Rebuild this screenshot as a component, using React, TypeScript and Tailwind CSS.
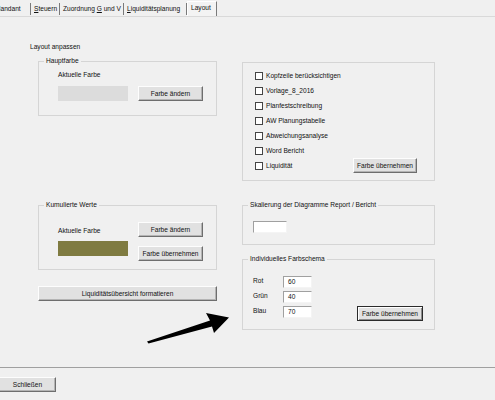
import React from 'react';

// ------------------------------------------------------------
// Small Win32-style building blocks
// ------------------------------------------------------------

function Btn({ children, className = '', focused = false }: {
  children: React.ReactNode;
  className?: string;
  focused?: boolean;
}) {
  return (
    <div
      className={`h-[15px] flex items-center justify-center bg-[#e1e1e1] border ${
        focused
          ? 'border-[#2b2b2b] shadow-[inset_1px_1px_0_#ffffff,inset_-1px_-1px_0_#8c8c8c]'
          : 'border-t-[#fdfdfd] border-l-[#fdfdfd] border-b-[#6e6e6e] border-r-[#6e6e6e] shadow-[inset_-1px_-1px_0_#b4b4b4]'
      } ${className}`}
    >
      {children}
    </div>
  );
}

function Field({ value = '', className = '' }: { value?: string; className?: string }) {
  return (
    <div
      className={`h-[12px] bg-white border border-t-[#a0a0a0] border-l-[#a0a0a0] border-b-[#f4f4f4] border-r-[#f4f4f4] flex items-center pl-[4px] ${className}`}
    >
      {value}
    </div>
  );
}

function Group({ title, className = '', children }: {
  title?: string;
  className?: string;
  children: React.ReactNode;
}) {
  return (
    <fieldset className={`border border-[#d5d5d5] ${className}`}>
      {title && <legend className="ml-[5px] px-[2px] leading-[8px]">{title}</legend>}
      {children}
    </fieldset>
  );
}

function Check({ label }: { label: string }) {
  return (
    <div className="flex items-center gap-[3px]">
      <div className="w-[8px] h-[8px] bg-white border border-[#444444]" />
      <span>{label}</span>
    </div>
  );
}

const TABS = [
  { label: 'Mandant', w: 'w-[39px]', key: '' },
  { label: 'Steuern', w: 'w-[29px]', key: 'S' },
  { label: 'Zuordnung G und V', w: 'w-[64px]', key: 'G' },
  { label: 'Liquiditätsplanung', w: 'w-[63px]', key: 'L' },
];

const CHECKS = [
  'Kopfzeile berücksichtigen',
  'Vorlage_8_2016',
  'Planfestschreibung',
  'AW Planungstabelle',
  'Abweichungsanalyse',
  'Word Bericht',
];

function TabLabel({ label, hot }: { label: string; hot: string }) {
  if (!hot) return <span>{label}</span>;
  const i = label.indexOf(hot);
  return (
    <span className="whitespace-pre">
      {label.slice(0, i)}
      <span className="underline">{label[i]}</span>
      {label.slice(i + 1)}
    </span>
  );
}

// ------------------------------------------------------------
// MAIN
// ------------------------------------------------------------

export default function App() {
  return (
    <div
      className="relative w-[495px] h-[400px] overflow-hidden bg-[#f0f0f0] text-[#111111] text-[6.6px] leading-[8px] flex flex-col"
      style={{ fontFamily: '"Liberation Sans", Arial, sans-serif' }}
    >
      {/* Tab strip */}
      <div className="h-[17px] border-b border-[#d9d9d9] flex items-end shrink-0">
        <div className="flex items-end -ml-[8px]">
          {TABS.map((t) => (
            <div
              key={t.label}
              className={`${t.w} h-[12px] mb-[1px] border-r border-[#7a7a7a] flex items-center pl-[3px] whitespace-nowrap`}
            >
              <TabLabel label={t.label} hot={t.key} />
            </div>
          ))}
          <div className="w-[30px] h-[15px] border-t border-l border-t-[#ffffff] border-l-[#ffffff] border-r border-r-[#7a7a7a] flex items-start pt-[2px] pl-[3px] bg-[#f3f3f3]">
            Layout
          </div>
        </div>
      </div>

      {/* Content */}
      <div className="flex-1 flex">
        {/* Left column */}
        <div className="ml-[30px] w-[187px] flex flex-col">
          <div className="mt-[26px] h-[8px]">Layout anpassen</div>

          <Group title="Hauptfarbe" className="mt-[6px] ml-[8px] h-[59px]">
            <div className="pl-[19px] mt-[6px]">Aktuelle Farbe</div>
            <div className="flex mt-[7px] pl-[19px]">
              <div className="w-[70px] h-[15px] bg-[#dcdcdc]" />
              <Btn className="ml-[10px] w-[65px]">Farbe ändern</Btn>
            </div>
          </Group>

          <Group title="Kumulierte Werte" className="mt-[85px] ml-[8px] h-[69px]">
            <div className="flex pl-[19px]">
              <div className="w-[70px] flex flex-col">
                <div className="mt-[18px]">Aktuelle Farbe</div>
                <div className="mt-[6px] h-[15px] bg-[#7f7b41]" />
              </div>
              <div className="ml-[10px] w-[65px] flex flex-col">
                <Btn className="mt-[13px]">Farbe ändern</Btn>
                <Btn className="mt-[9px]">Farbe übernehmen</Btn>
              </div>
            </div>
          </Group>

          <Btn className="mt-[16px] ml-[8px] w-[179px]">Liquiditätsübersicht formatieren</Btn>
        </div>

        {/* Right column */}
        <div className="ml-[25px] w-[193px] flex flex-col">
          <div className="mt-[45px] h-[119px] border border-[#d5d5d5] pt-[5px] pl-[12px] pr-[17px]">
            {CHECKS.map((c) => (
              <div key={c} className="h-[15px] flex items-center">
                <Check label={c} />
              </div>
            ))}
            <div className="h-[15px] flex items-center justify-between">
              <Check label="Liquidität" />
              <Btn className="w-[64px]">Farbe übernehmen</Btn>
            </div>
          </div>

          <Group title="Skalierung der Diagramme Report / Bericht" className="mt-[20px] h-[44px]">
            <Field className="ml-[10px] mt-[12px] w-[34px]" />
          </Group>

          <Group title="Individuelles Farbschema" className="mt-[10px] h-[75px]">
            <div className="flex items-start mt-[13px] pl-[10px]">
              <div className="flex flex-col gap-[3px]">
                {[
                  ['Rot', '60'],
                  ['Grün', '40'],
                  ['Blau', '70'],
                ].map(([l, v]) => (
                  <div key={l} className="flex items-center h-[12px]">
                    <span className="w-[30px] -mt-[3px]">{l}</span>
                    <Field value={v} className="w-[29px]" />
                  </div>
                ))}
              </div>
              <Btn focused className="ml-[45px] mt-[30px] w-[66px]">Farbe übernehmen</Btn>
            </div>
          </Group>
        </div>
      </div>

      {/* Footer */}
      <div className="h-[33px] shrink-0 border-t border-[#a0a0a0] pt-[9px]">
        <Btn className="w-[57px] -ml-[1px]">Schließen</Btn>
      </div>

      {/* Annotation arrow */}
      <svg className="absolute left-0 top-0 pointer-events-none" width="495" height="400">
        <polygon
          points="147,341.5 210,320.5 206,313 229,317.5 214,333 212,326.5 148.5,343.5"
          fill="#000000"
        />
      </svg>
    </div>
  );
}
